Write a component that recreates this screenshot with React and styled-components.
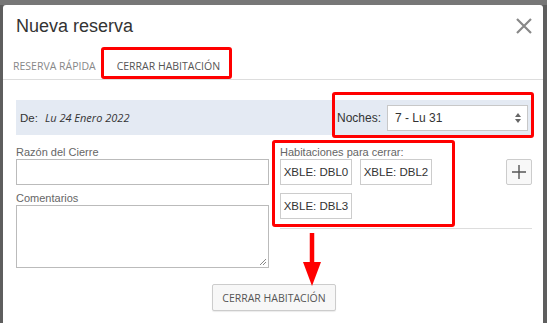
import React from 'react';
import styled, { createGlobalStyle } from 'styled-components';

const GlobalStyle = createGlobalStyle`
  html, body {
    margin: 0;
    padding: 0;
  }
  body {
    width: 547px;
    height: 323px;
    overflow: hidden;
    background: #5e5e5e;
    font-family: "Liberation Sans", Arial, sans-serif;
  }
`;

const Page = styled.div`
  position: relative;
  box-sizing: border-box;
  height: 323px;
  padding: 5px 4px 0 3px;
  background: linear-gradient(#777 0 5px, #5e5e5e 5px);
`;

const Modal = styled.div`
  height: 100%;
  background: #fff;
  border-radius: 3px 3px 0 0;
`;

const Header = styled.div`
  display: flex;
  align-items: center;
  justify-content: space-between;
  padding: 11px 9px 0 13px;
`;

const Title = styled.h4`
  margin: 0;
  font-size: 18px;
  line-height: 20px;
  font-weight: 400;
  color: #333;
`;

const Close = styled.button`
  width: 20px;
  height: 20px;
  padding: 0;
  border: 0;
  background: none;
  display: flex;
  align-items: center;
  justify-content: center;
`;

const Tabs = styled.div`
  display: flex;
  margin-top: 14px;
  border-bottom: 1px solid #ddd;
`;

const Tab = styled.div`
  padding: 10px 10px 6px 10px;
  font-family: "Open Sans", sans-serif;
  font-size: 10.5px;
  line-height: 13px;
  text-transform: uppercase;
  color: ${(p) => (p.active ? '#555' : '#888')};
  & + & {
    padding-left: 11px;
  }
`;

const Body = styled.div`
  padding: 20px 11px 0 13px;
`;

const InfoBar = styled.div`
  display: flex;
  align-items: center;
  justify-content: space-between;
  height: 35px;
  padding: 0 4px 0 4px;
  background: #e4eaf3;
  font-size: 11.5px;
  color: #333;
`;

const DateText = styled.span`
  margin-left: 7px;
  font-family: "Open Sans", sans-serif;
  font-style: italic;
  font-size: 11px;
`;

const Nights = styled.label`
  display: flex;
  align-items: center;
  gap: 6px;
  font-size: 12px;
`;

const Select = styled.div`
  box-sizing: border-box;
  width: 141px;
  height: 26px;
  display: flex;
  align-items: center;
  justify-content: space-between;
  padding: 0 6px 0 7px;
  background: #fff;
  border: 1px solid #c8c8c8;
  color: #333;
`;

const FormRow = styled.div`
  display: grid;
  grid-template-columns: 253px 1fr;
  column-gap: 11px;
  margin-top: 11px;
`;

const Field = styled.div`
  display: flex;
  flex-direction: column;
  & + & {
    margin-top: 7px;
  }
`;

const Label = styled.div`
  font-size: 11px;
  line-height: 13px;
  color: #666;
`;

const Input = styled.div`
  box-sizing: border-box;
  height: ${(p) => p.h}px;
  border: 1px solid #bbb;
  position: relative;
`;

const Grip = styled.svg`
  position: absolute;
  right: 1px;
  bottom: 1px;
`;

const RoomsArea = styled.div`
  display: flex;
  flex-direction: column;
`;

const RoomsTop = styled.div`
  display: flex;
  justify-content: space-between;
`;

const Chips = styled.div`
  display: flex;
  flex-wrap: wrap;
  gap: 8px;
  width: 160px;
`;

const Chip = styled.div`
  box-sizing: border-box;
  width: 72px;
  height: 26px;
  display: flex;
  align-items: center;
  justify-content: center;
  border: 1px solid #ccc;
  font-size: 11.5px;
  color: #333;
`;

const PlusButton = styled.div`
  box-sizing: border-box;
  width: 26px;
  height: 26px;
  margin-top: 13px;
  display: flex;
  align-items: center;
  justify-content: center;
  border: 1px solid #ccc;
  border-radius: 2px;
  background: #f8f8f8;
`;

const Divider = styled.div`
  height: 1px;
  margin-top: 9px;
  background: #ddd;
`;

const Footer = styled.div`
  display: flex;
  justify-content: center;
  margin-top: 16px;
`;

const Button = styled.div`
  box-sizing: border-box;
  height: 27px;
  padding: 0 9px;
  display: flex;
  align-items: center;
  border: 1px solid #ccc;
  border-radius: 2px;
  background: #f7f7f7;
  font-family: "Open Sans", sans-serif;
  font-size: 10.5px;
  color: #555;
  text-transform: uppercase;
  box-shadow: 0 1px 1px rgba(0, 0, 0, 0.08);
`;

const Mark = styled.div`
  position: absolute;
  box-sizing: border-box;
  border: 3px solid #f00;
  border-radius: 3px;
  pointer-events: none;
`;

const Arrow = styled.svg`
  position: absolute;
  left: 302px;
  top: 233px;
`;

function App() {
  return (
    <>
      <GlobalStyle />
      <Page>
        <Modal>
          <Header>
            <Title>Nueva reserva</Title>
            <Close aria-label="Cerrar">
              <svg width="16" height="16" viewBox="0 0 16 16">
                <path d="M1 1 L15 15 M15 1 L1 15" stroke="#888" strokeWidth="2.2" />
              </svg>
            </Close>
          </Header>
          <Tabs>
            <Tab>Reserva rápida</Tab>
            <Tab active>Cerrar habitación</Tab>
          </Tabs>
          <Body>
            <InfoBar>
              <span>
                De:
                <DateText>Lu 24 Enero 2022</DateText>
              </span>
              <Nights>
                Noches:
                <Select>
                  7 - Lu 31
                  <svg width="6" height="10" viewBox="0 0 6 10">
                    <path d="M0 4 L3 0 L6 4 Z M0 6 L3 10 L6 6 Z" fill="#666" />
                  </svg>
                </Select>
              </Nights>
            </InfoBar>
            <FormRow>
              <div>
                <Field>
                  <Label>Razón del Cierre</Label>
                  <Input h={26} />
                </Field>
                <Field>
                  <Label>Comentarios</Label>
                  <Input h={63}>
                    <Grip width="8" height="8" viewBox="0 0 8 8">
                      <path d="M1 7 L7 1 M4 7 L7 4" stroke="#888" strokeWidth="1" />
                    </Grip>
                  </Input>
                </Field>
              </div>
              <RoomsArea>
                <RoomsTop>
                  <div>
                    <Label>Habitaciones para cerrar:</Label>
                    <Chips>
                      <Chip>XBLE: DBL0</Chip>
                      <Chip>XBLE: DBL2</Chip>
                      <Chip>XBLE: DBL3</Chip>
                    </Chips>
                  </div>
                  <PlusButton>
                    <svg width="14" height="14" viewBox="0 0 14 14">
                      <path d="M7 0 V14 M0 7 H14" stroke="#555" strokeWidth="1.4" />
                    </svg>
                  </PlusButton>
                </RoomsTop>
                <Divider />
              </RoomsArea>
            </FormRow>
            <Footer>
              <Button>Cerrar habitación</Button>
            </Footer>
          </Body>
        </Modal>
        <Mark style={{ left: 101, top: 47, width: 131, height: 32 }} />
        <Mark style={{ left: 332, top: 92, width: 202, height: 46 }} />
        <Mark style={{ left: 272, top: 140, width: 183, height: 87 }} />
        <Arrow width="20" height="54" viewBox="0 0 20 54">
          <path d="M10 0 V32" stroke="#f00" strokeWidth="4.5" />
          <path d="M1 29 L19 29 L10 53 Z" fill="#f00" />
        </Arrow>
      </Page>
    </>
  );
}

export default App;
